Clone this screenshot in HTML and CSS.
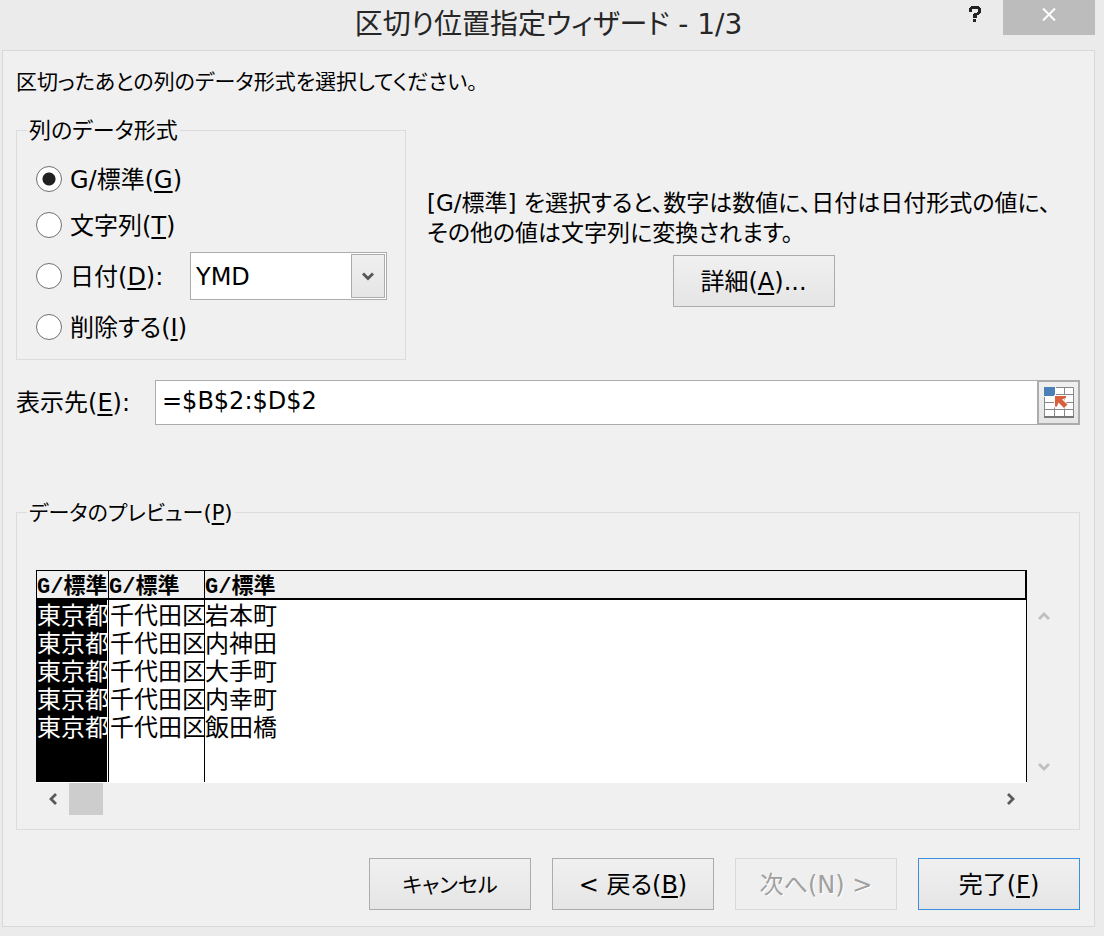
FILE: index.html
```html
<!DOCTYPE html>
<html lang="ja">
<head>
    <meta charset="UTF-8">
    <meta name="viewport" content="width=device-width, initial-scale=1.0">
    <title>区切り位置指定ウィザード - 1/3</title>
    <link rel="stylesheet" href="styles.css">
</head>
<body>
    <header class="titlebar">
        <h1>区切り位置指定ウィザード - 1/3</h1>
        <div class="window-buttons">
            <button type="button" class="help" aria-label="ヘルプ">
                <svg width="12" height="18" viewBox="0 0 12 18" shape-rendering="crispEdges"><path d="M2 1h8v1h1v1h1v5h-1v1h-1v1H8v3H4V9h1V8h3V7h1V4H3v3H0V3h1V2h1zM4 14h3v3H4z" fill="#222"/></svg>
            </button>
            <button type="button" class="close" aria-label="閉じる">
                <svg width="14" height="13" viewBox="0 0 14 13"><path d="M1 .5l12 12M13 .5l-12 12" stroke="#fff" stroke-width="2"/></svg>
            </button>
        </div>
    </header>

    <form class="panel">
        <p class="lead">区切ったあとの列のデータ形式を選択してください。</p>

        <div class="format">
            <fieldset class="group types">
                <legend>列のデータ形式</legend>
                <div class="row">
                    <input type="radio" name="type" id="typeG" checked>
                    <label for="typeG">G/標準(<u>G</u>)</label>
                </div>
                <div class="row">
                    <input type="radio" name="type" id="typeT">
                    <label for="typeT">文字列(<u>T</u>)</label>
                </div>
                <div class="row row-date">
                    <input type="radio" name="type" id="typeD">
                    <label for="typeD">日付(<u>D</u>):</label>
                    <div class="combo">
                        <select aria-label="日付の形式">
                            <option>YMD</option>
                            <option>MDY</option>
                            <option>DMY</option>
                        </select>
                        <span class="combo-arrow">
                            <svg width="12" height="9" viewBox="0 0 12 9"><path d="M1 1.5l5 5 5-5" fill="none" stroke="#555" stroke-width="2.8"/></svg>
                        </span>
                    </div>
                </div>
                <div class="row">
                    <input type="radio" name="type" id="typeI">
                    <label for="typeI">削除する(<u>I</u>)</label>
                </div>
            </fieldset>

            <div class="info">
                <p>[G/標準] を選択すると、数字は数値に、日付は日付形式の値に、<br>その他の値は文字列に変換されます。</p>
                <button type="button" class="btn">詳細(<u>A</u>)...</button>
            </div>
        </div>

        <div class="dest">
            <label for="dest">表示先(<u>E</u>):</label>
            <input type="text" id="dest" value="=$B$2:$D$2">
            <button type="button" class="picker" aria-label="範囲の選択">
                <svg width="30" height="31" viewBox="0 0 30 31">
                    <path d="M0 0h30v31H0z" fill="#fff"/>
                    <path d="M0 15.5h30M0 22.5h30M12 7.5h18M10.500 8v23M20.500 0v31" stroke="#888" stroke-width="1"/>
                    <path d="M.5 10v20.500M12 .5h17.500v30" fill="none" stroke="#888"/>
                    <path d="M0 30h30" stroke="#777" stroke-width="2"/>
                    <path d="M0 0h11v9H0z" fill="#4a7fb8"/>
                    <path d="M10 8h14v3.500l-4 1 4 5v4h-4l-5-5-1.500 4H10z" fill="#fff"/>
                    <path d="M11 9h11v2l-4 1.500 5.500 5-3.500 3.500-5.500-5.500L13 19.500h-2z" fill="#d9603f"/>
                </svg>
            </button>
        </div>

        <fieldset class="group preview">
            <legend>データのプレビュー(<u>P</u>)</legend>
            <div class="viewer">
                <div class="sheet">
                    <table>
                        <thead>
                            <tr><th class="c1">G/標準</th><th class="c2">G/標準</th><th>G/標準</th></tr>
                        </thead>
                        <tbody>
                            <tr><td>東京都</td><td>千代田区</td><td>岩本町</td></tr>
                            <tr><td>東京都</td><td>千代田区</td><td>内神田</td></tr>
                            <tr><td>東京都</td><td>千代田区</td><td>大手町</td></tr>
                            <tr><td>東京都</td><td>千代田区</td><td>内幸町</td></tr>
                            <tr><td>東京都</td><td>千代田区</td><td>飯田橋</td></tr>
                            <tr class="rest"><td></td><td></td><td></td></tr>
                        </tbody>
                    </table>
                </div>
                <div class="vscroll">
                    <button type="button" disabled aria-label="上へ"><svg width="12" height="10" viewBox="0 0 12 10"><path d="M1 8l5-5 5 5" fill="none" stroke="#bfbfbf" stroke-width="2.8"/></svg></button>
                    <button type="button" disabled aria-label="下へ"><svg width="12" height="10" viewBox="0 0 12 10"><path d="M1 2l5 5 5-5" fill="none" stroke="#bfbfbf" stroke-width="2.8"/></svg></button>
                </div>
                <div class="hscroll">
                    <button type="button" aria-label="左へ"><svg width="10" height="12" viewBox="0 0 10 12"><path d="M8 1L3 6l5 5" fill="none" stroke="#5a5a5a" stroke-width="2.8"/></svg></button>
                    <div class="thumb"></div>
                    <button type="button" class="right" aria-label="右へ"><svg width="10" height="12" viewBox="0 0 10 12"><path d="M2 1l5 5-5 5" fill="none" stroke="#5a5a5a" stroke-width="2.8"/></svg></button>
                </div>
            </div>
        </fieldset>

        <div class="actions">
            <button type="button" class="btn cancel">キャンセル</button>
            <button type="button" class="btn">&lt; 戻る(<u>B</u>)</button>
            <button type="button" class="btn" disabled>次へ(N) &gt;</button>
            <button type="submit" class="btn primary">完了(<u>F</u>)</button>
        </div>
    </form>
</body>
</html>
```

FILE: styles.css
```css
* {
    box-sizing: border-box;
}

body {
    margin: 0;
    padding: 0 9px 9px 2px;
    background: #ebebeb;
    color: #000;
    font-family: "DejaVu Sans", "Noto Sans CJK JP", sans-serif;
    font-size: 24px;
    line-height: 30px;
    font-feature-settings: "palt";
}

button, input, select {
    margin: 0;
    padding: 0;
    border: 0;
    border-radius: 0;
    background: none;
    color: inherit;
    font: inherit;
    font-feature-settings: inherit;
}

h1, p {
    margin: 0;
    font-weight: normal;
}

u {
    text-decoration-thickness: 2px;
    text-underline-offset: 3px;
}

/* title bar */
.titlebar {
    position: relative;
    height: 50px;
}

.titlebar h1 {
    color: #262626;
    font-size: 28px;
    line-height: 50px;
    text-align: center;
}

.window-buttons {
    position: absolute;
    top: 0;
    right: 0;
    display: flex;
}

.window-buttons button {
    display: flex;
    justify-content: center;
    height: 35px;
}

.help {
    width: 56px;
    padding-top: 5px;
}

.close {
    width: 92px;
    padding-top: 8px;
    background: #bcbcbc;
}

/* dialog */
.panel {
    padding: 16px 14px 16px 13px;
    border: 1px solid #d9d9d9;
    background: #f0f0f0;
}

.lead, .preview legend, .cancel {
    font-size: 21px;
}

.group {
    min-width: 0;
    margin: 0;
    border: 1px solid #dcdcdc;
}

.group legend {
    margin-left: -9px;
    padding: 2px 2px 0;
    line-height: 28px;
}

.types legend {
    font-size: 22px;
}

.format {
    display: flex;
    gap: 21px;
    margin-top: 18px;
}

.types {
    width: 390px;
    padding: 11px 18px 9px 19px;
}

.row {
    display: flex;
    align-items: center;
    height: 46px;
}

.row-date {
    height: 56px;
}

.row label {
    margin-left: 8px;
    padding-top: 2px;
}

input[type="radio"] {
    appearance: none;
    width: 26px;
    height: 26px;
    border: 1px solid #707070;
    border-radius: 50%;
    background: #fff;
}

input[type="radio"]:checked {
    background: radial-gradient(circle, #222 6px, #fff 7px);
}

.combo {
    position: relative;
    width: 197px;
    margin-left: auto;
}

.combo select {
    appearance: none;
    width: 100%;
    height: 48px;
    padding: 2px 0 0 5px;
    border: 1px solid #acacac;
    background: #fff;
}

.combo-arrow {
    position: absolute;
    top: 2px;
    right: 2px;
    bottom: 2px;
    display: flex;
    align-items: center;
    justify-content: center;
    width: 34px;
    border: 1px solid #acacac;
    background: linear-gradient(#f0f0f0, #e5e5e5);
    pointer-events: none;
}

.info {
    flex: 1;
    display: flex;
    flex-direction: column;
    align-items: center;
    justify-content: center;
    gap: 7px;
    padding-top: 20px;
}

.info p {
    width: 100%;
    font-size: 23px;
    white-space: nowrap;
}

.btn {
    width: 162px;
    height: 52px;
    padding-top: 2px;
    border: 1px solid #acacac;
    background: linear-gradient(#f0f0f0, #e5e5e5);
}

.btn:disabled {
    border-color: #d9d9d9;
    background: #efefef;
    color: #a0a0a0;
    text-shadow: 1px 1px #fff;
}

.primary {
    border-color: #3c8fdc;
}

.dest {
    display: flex;
    align-items: center;
    margin-top: 20px;
}

.dest label {
    width: 139px;
}

.dest input {
    flex: 1;
    height: 45px;
    padding: 0 6px 4px;
    border: 1px solid #acacac;
    border-right: 0;
    background: #fff;
}

.picker {
    display: flex;
    align-items: center;
    justify-content: center;
    width: 43px;
    height: 45px;
    border: 2px solid #acacac;
    background: linear-gradient(#f0f0f0, #e5e5e5);
}

/* data preview */
.preview {
    margin-top: 72px;
    padding: 43px 18px 14px 19px;
}

.viewer {
    display: grid;
    grid-template-columns: 1fr 34px;
}

.sheet {
    height: 213px;
    background: #fff;
}

.sheet table {
    width: 100%;
    table-layout: fixed;
    border-collapse: separate;
    border-spacing: 0;
    font-family: "Liberation Mono", "Noto Sans CJK JP", monospace;
    font-feature-settings: normal;
}

.sheet th, .sheet td {
    height: 28px;
    padding: 8px 0 0;
    border-right: 1px solid #000;
    line-height: 20px;
    text-align: left;
    white-space: nowrap;
}

.sheet th {
    height: 30px;
    padding-top: 7px;
    border-top: 1px solid #000;
    border-bottom: 2px solid #000;
    background: #f0f0f0;
    font-size: 22px;
}

.sheet th:last-child {
    border-right-width: 2px;
}

.sheet th:first-child {
    border-left: 1px solid #000;
}

.sheet td:first-child {
    background: #000;
    color: #fff;
    box-shadow: inset -1px 0 #fff;
}

.sheet td:first-child, .sheet td:nth-child(2) {
    padding-left: 1px;
}

.sheet .c1 {
    width: 73px;
}

.sheet .c2 {
    width: 96px;
}

.sheet .rest td {
    height: 42px;
}

.vscroll {
    display: flex;
    flex-direction: column;
    justify-content: space-between;
    padding-top: 30px;
}

.vscroll button, .hscroll button {
    display: flex;
    align-items: center;
    justify-content: center;
    width: 33px;
    height: 32px;
}

.hscroll {
    display: flex;
}

.thumb {
    width: 34px;
    background: #cdcdcd;
}

.hscroll .right {
    margin-left: auto;
}

.actions {
    display: flex;
    justify-content: flex-end;
    gap: 21px;
    margin-top: 28px;
}
```
